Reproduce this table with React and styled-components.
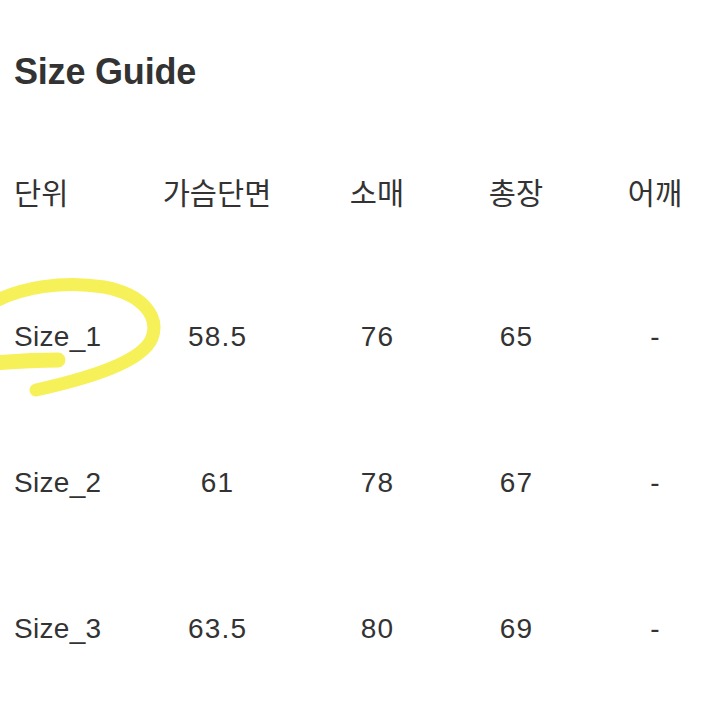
import React from "react";
import styled, { createGlobalStyle } from "styled-components";

const GlobalStyle = createGlobalStyle`
  html, body {
    margin: 0;
    padding: 0;
    background: #ffffff;
  }
  body {
    font-family: "Liberation Sans", "Noto Sans CJK KR", sans-serif;
    color: #333333;
  }
`;

const Page = styled.div`
  position: relative;
  width: 714px;
  height: 714px;
  overflow: hidden;
  background: #ffffff;
  padding: 52px 0 0 14px;
  box-sizing: border-box;
`;

const Title = styled.h1`
  margin: 0 0 25px 0;
  font-size: 36px;
  line-height: 40px;
  font-weight: 700;
  color: #333333;
  letter-spacing: -0.2px;
`;

const Table = styled.div`
  display: flex;
  flex-direction: column;
`;

const Row = styled.div`
  display: grid;
  grid-template-columns: 96px 214px 106px 172px 106px;
  align-items: center;
  height: ${(p) => p.$height}px;
`;

const HeaderCell = styled.div`
  font-family: "Noto Sans CJK KR", "Liberation Sans", sans-serif;
  font-size: 29.5px;
  line-height: 34px;
  color: #333333;
  text-align: ${(p) => (p.$first ? "left" : "center")};
  white-space: nowrap;
`;

const Cell = styled.div`
  font-family: "Liberation Sans", "Noto Sans CJK KR", sans-serif;
  font-size: 28px;
  letter-spacing: ${(p) => (p.$first ? 0.3 : 1.2)}px;
  padding-left: ${(p) => (p.$first ? 0 : 1.2)}px;
  line-height: 34px;
  color: #333333;
  text-align: ${(p) => (p.$first ? "left" : "center")};
  white-space: nowrap;
`;

const Highlight = styled.svg`
  position: absolute;
  left: 0;
  top: 0;
  pointer-events: none;
`;

const headers = ["단위", "가슴단면", "소매", "총장", "어깨"];
const rows = [
  ["Size_1", "58.5", "76", "65", "-"],
  ["Size_2", "61", "78", "67", "-"],
  ["Size_3", "63.5", "80", "69", "-"],
];

export default function App() {
  return (
    <>
      <GlobalStyle />
      <Page>
        <Title>Size Guide</Title>
        <Table>
          <Row $height={147}>
            {headers.map((h, i) => (
              <HeaderCell key={h} $first={i === 0}>
                {h}
              </HeaderCell>
            ))}
          </Row>
          {rows.map((r) => (
            <Row key={r[0]} $height={146}>
              {r.map((v, i) => (
                <Cell key={i} $first={i === 0}>
                  {v}
                </Cell>
              ))}
            </Row>
          ))}
        </Table>
        <Highlight width="714" height="714" viewBox="0 0 714 714">
          <g
            fill="none"
            stroke="#f6f04c"
            strokeLinecap="round"
            strokeLinejoin="round"
            opacity="0.92"
          >
            <path
              d="M -6 302 C 20 288, 62 280, 104 287 C 142 294, 160 316, 152 338 C 142 362, 90 378, 36 390"
              strokeWidth="13"
            />
            <path d="M -6 363 C 18 361, 40 360, 58 360" strokeWidth="15" />
          </g>
        </Highlight>
      </Page>
    </>
  );
}
